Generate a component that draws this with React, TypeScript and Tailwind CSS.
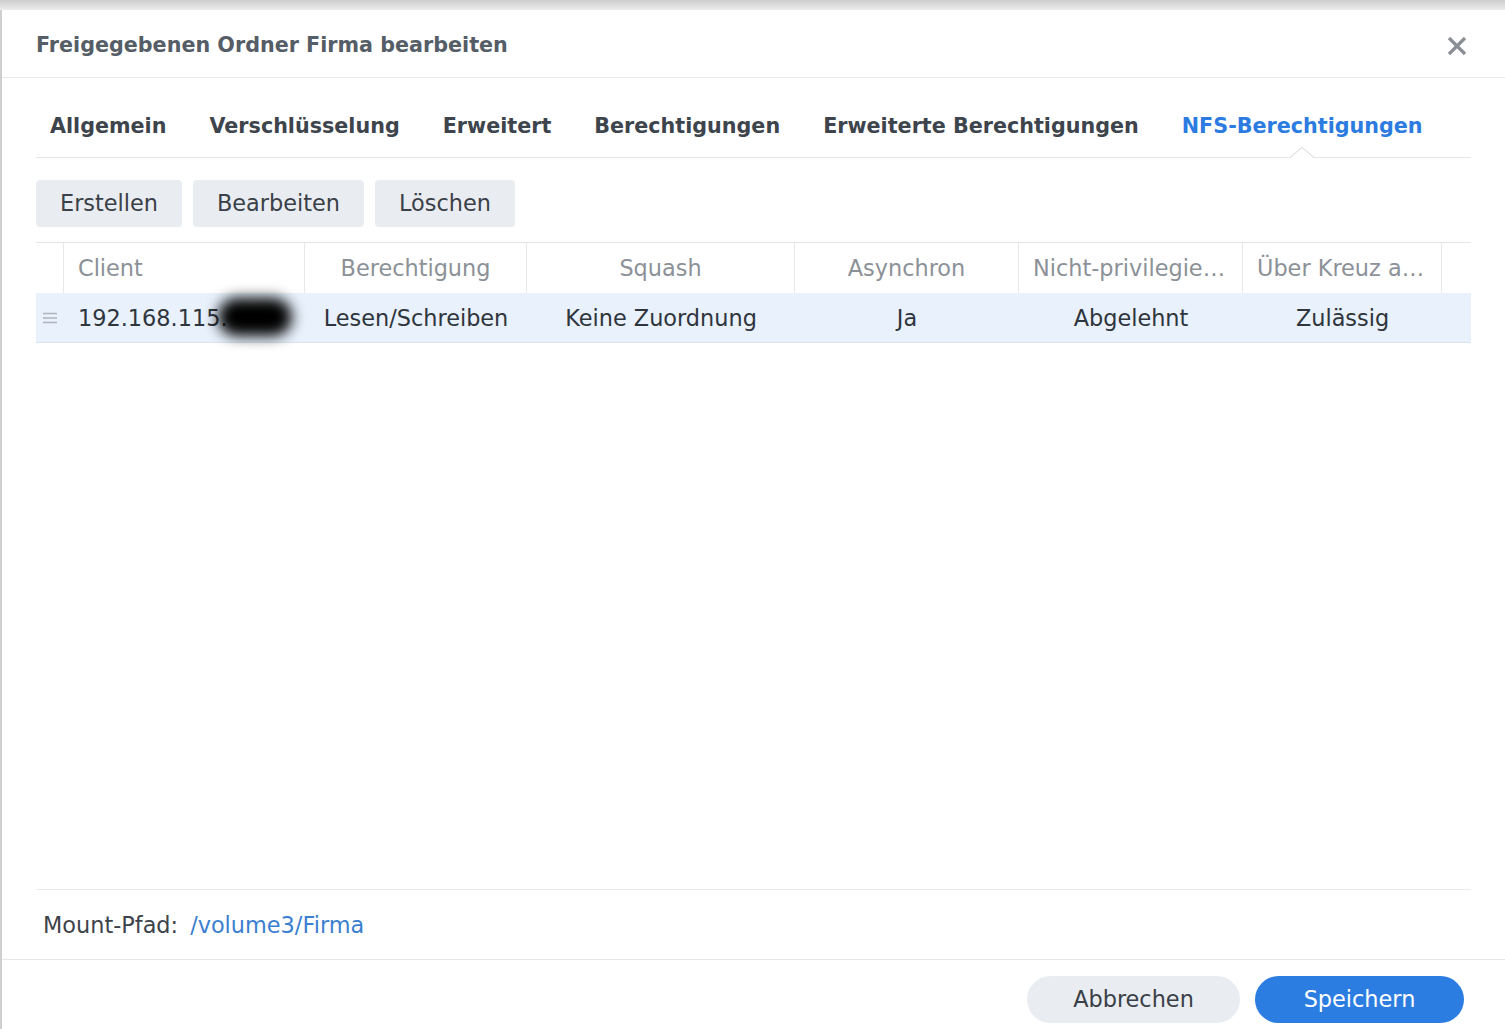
import React from 'react';

const font = { fontFamily: '"DejaVu Sans", Verdana, sans-serif' };

const tabs = [
  'Allgemein',
  'Verschlüsselung',
  'Erweitert',
  'Berechtigungen',
  'Erweiterte Berechtigungen',
  'NFS-Berechtigungen',
];

const columns = [
  { label: 'Client', width: 'w-[241px]', align: 'text-left' },
  { label: 'Berechtigung', width: 'w-[222px]', align: 'text-center' },
  { label: 'Squash', width: 'w-[268px]', align: 'text-center' },
  { label: 'Asynchron', width: 'w-[224px]', align: 'text-center' },
  { label: 'Nicht-privilegierter Port', width: 'w-[224px]', align: 'text-center' },
  { label: 'Über Kreuz aufgelöste Mounts', width: 'w-[199px]', align: 'text-center' },
];

const row = ['192.168.115.', 'Lesen/Schreiben', 'Keine Zuordnung', 'Ja', 'Abgelehnt', 'Zulässig'];

const App = () => {
  return (
    <div className="w-full h-[1029px] overflow-hidden bg-white flex flex-col" style={font}>
      <div className="h-[10px] bg-gradient-to-b from-[#cdcdcd] to-[#ececec]" />
      <div className="flex-1 flex flex-col border-l-2 border-[#cfcfcf] bg-white">
        {/* Title bar */}
        <div className="h-[68px] flex items-center justify-between pt-[4px] pl-[34px] pr-[38px] border-b border-[#e6e8eb]">
          <h1 className="text-[20.7px] font-bold text-[#555d66]">
            Freigegebenen Ordner Firma bearbeiten
          </h1>
          <svg width="20" height="20" viewBox="0 0 20 20" className="text-[#8a8f95]">
            <path d="M2 2 L18 18 M18 2 L2 18" stroke="currentColor" strokeWidth="3.2" strokeLinecap="butt" />
          </svg>
        </div>

        {/* Tabs */}
        <div className="mx-[34px] mt-[18px] h-[62px] border-b border-[#e2e5e8] flex items-center pl-[14px] gap-[43px]">
          {tabs.map((t, i) => (
            <div
              key={t}
              className={`text-[20.7px] font-bold relative ${i === tabs.length - 1 ? 'text-[#2b7be0]' : 'text-[#3d444c]'}`}
            >
              {t}
              {i === tabs.length - 1 && (
                <svg
                  width="24"
                  height="12"
                  viewBox="0 0 24 12"
                  className="absolute left-1/2 -translate-x-1/2 top-[35px]"
                >
                  <path d="M0 12 L12 1.5 L24 12 Z" fill="white" />
                  <path d="M0 11.5 L12 1.5 L24 11.5" fill="none" stroke="#d3d7dc" strokeWidth="1" />
                </svg>
              )}
            </div>
          ))}
        </div>

        {/* Toolbar */}
        <div className="mx-[34px] mt-[22px] flex gap-[11px]">
          {['Erstellen', 'Bearbeiten', 'Löschen'].map((b) => (
            <button
              key={b}
              className="h-[47px] px-[24px] rounded-[4px] bg-[#e9edf1] text-[22.4px] text-[#3a4048]"
            >
              {b}
            </button>
          ))}
        </div>

        {/* Table */}
        <div className="mx-[34px] mt-[15px] border-t border-[#e2e5e8]">
          <div className="flex h-[50px] items-center">
            <div className="w-[28px] h-full border-r border-[#e6e8eb]" />
            {columns.map((c, i) => (
              <div
                key={c.label}
                className={`${c.width} h-full flex items-center pt-[2px] border-r border-[#e6e8eb] ${i === 0 ? 'pl-[14px]' : 'px-[14px]'}`}
              >
                <span className={`w-full truncate ${c.align} text-[22.4px] text-[#8c9198]`}>{c.label}</span>
              </div>
            ))}
            <div className="flex-1" />
          </div>
          <div className="flex h-[50px] items-center bg-[#e8f1fc] border-b border-[#d9e4f1]">
            <div className="w-[28px] flex justify-center">
              <svg width="14" height="12" viewBox="0 0 14 12">
                <path d="M0 1.5 H14 M0 6 H14 M0 10.5 H14" stroke="#aeb4bb" strokeWidth="1.5" />
              </svg>
            </div>
            {columns.map((c, i) => (
              <div key={c.label} className={`${c.width} h-full flex items-center pt-[2px] ${i === 0 ? 'pl-[14px]' : 'px-[14px]'}`}>
                {i === 0 ? (
                  <span className="relative text-[22.4px] text-[#2f353c]">
                    {row[0]}
                    <span className="absolute left-[140px] top-[-4px] w-[74px] h-[38px] rounded-full bg-black blur-[7px]" />
                  </span>
                ) : (
                  <span className={`w-full truncate ${c.align} text-[22.4px] text-[#2f353c]`}>{row[i]}</span>
                )}
              </div>
            ))}
            <div className="flex-1" />
          </div>
        </div>

        <div className="flex-1" />

        {/* Mount path */}
        <div className="mx-[34px] border-t border-[#e8eaed] h-[70px] flex items-center pt-[2px] pl-[7px] text-[22.4px]">
          <span className="text-[#3d434a]">Mount-Pfad:</span>
          <span className="ml-[12px] text-[#3b80d0]">/volume3/Firma</span>
        </div>

        {/* Footer */}
        <div className="border-t border-[#e4e6e9] h-[70px] flex items-start pt-[16px] justify-end pr-[41px] gap-[15px]">
          <button className="h-[47px] w-[213px] rounded-full bg-[#e9edf1] text-[22.4px] text-[#3a4048]">
            Abbrechen
          </button>
          <button className="h-[47px] w-[209px] rounded-full bg-[#2b7de1] text-[22.4px] text-white">
            Speichern
          </button>
        </div>
      </div>
    </div>
  );
};

export default App;
